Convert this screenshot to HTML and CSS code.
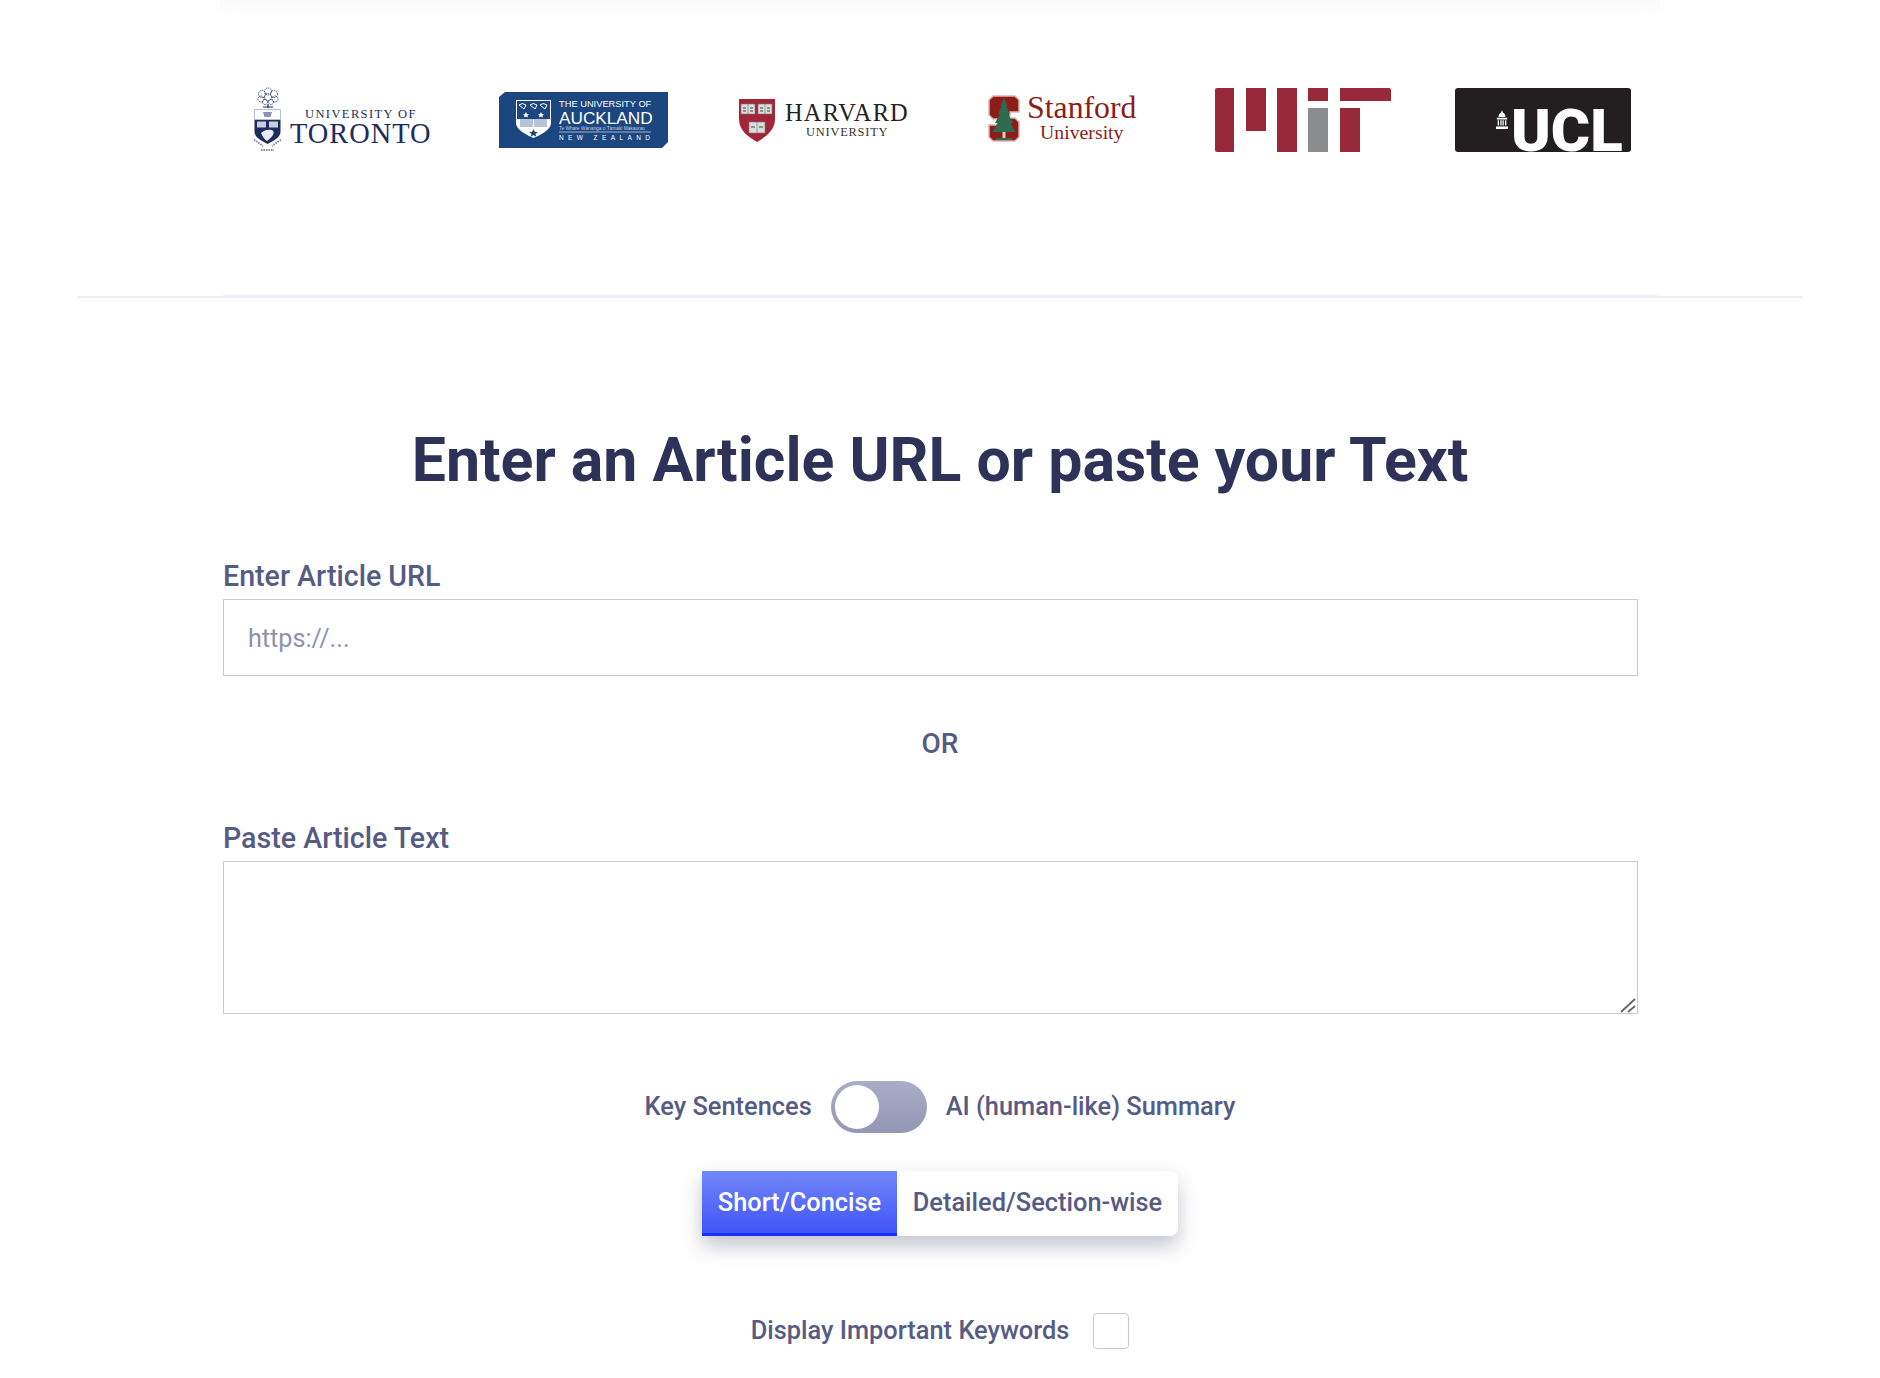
FILE: index.html
```html
<!DOCTYPE html>
<html lang="en">
<head>
  <meta charset="UTF-8">
  <title>Summarize Article</title>
  <link rel="stylesheet" href="styles.css">
</head>
<body>

<div class="top-fade"></div>

<!-- University logos -->
<div class="logos">
  <svg class="logo" viewBox="0 0 200 80" aria-label="University of Toronto">
    <g fill="none" stroke="#1d2c5e" stroke-width=".9" stroke-dasharray="1.200 .8">
      <circle cx="19" cy="14" r="3.500"/>
      <circle cx="25" cy="11.500" r="3.500"/>
      <circle cx="31" cy="14" r="3.500"/>
      <circle cx="18" cy="19" r="3"/>
      <circle cx="25" cy="17" r="3.500"/>
      <circle cx="32" cy="19" r="3"/>
      <circle cx="22" cy="22" r="2.500"/>
      <circle cx="28" cy="22" r="2.500"/>
    </g>
    <path d="M25 24v4M20 27h10" stroke="#1d2c5e" stroke-width="1.200"/>
    <path d="M11.500 29.500h26v10h-26z" fill="#fff" stroke="#9aa2bd" stroke-width=".7"/>
    <path d="M20 32h9l-1.500 5h-6z" fill="#8a93b2"/>
    <path d="M11.500 40h26v12c0 5-7 9-13 12-6-3-13-7-13-12z" fill="#1d2c5e"/>
    <path d="M14 41.500h9v6h-9zM26 41.500h9v6h-9z" fill="#c9cede"/>
    <path d="M18 53c3-3 7-4 11-3 2 1 2 3 1 5-2 3-4 4-6 6-3-2-4-4-6-8z" fill="#e9ebf3"/>
    <path d="M11 60c3 1 6 4 9 6M38 60c-3 1-6 4-9 6M18 70h13" fill="none" stroke="#7d87a8" stroke-width="2" stroke-dasharray="1.500 1"/>
    <text class="uoft-small" x="62" y="37.500">UNIVERSITY OF</text>
    <text class="uoft-big" x="47" y="63">TORONTO</text>
  </svg>

  <svg class="logo" viewBox="0 0 200 80" aria-label="The University of Auckland">
    <path d="M16 17l6-5h163v50l-6 6H16z" fill="#1c4680"/>
    <path d="M33 20h35v23c0 6-8 11-17.500 15C41 54 33 49 33 43z" fill="#fff"/>
    <path d="M34 21h33v18H34z" fill="#1c4680"/>
    <path d="M36 25q3-3 7 0l-2 4zM47 25q3-3 7 0l-2 4zM57 25q3-3 7 0l-2 4z" fill="none" stroke="#fff"/>
    <path d="M43 32l1 2h2l-1.500 1.500.5 2-2-1-2 1 .5-2L40 34h2zM58 32l1 2h2l-1.500 1.500.5 2-2-1-2 1 .5-2L55 34h2z" fill="#fff"/>
    <path d="M37 39h13v8H37zM51 39h13v8H51z" fill="#b8c3d6"/>
    <path d="M50.500 49l1.500 3h3l-2.500 2 1 3-3-2-3 2 1-3-2.500-2h3z" fill="#1c4680"/>
    <g fill="#fff">
      <text class="akl-top" x="76" y="27">THE UNIVERSITY OF</text>
      <text class="akl-main" x="76" y="43.500">AUCKLAND</text>
      <text class="akl-tiny" x="76" y="49.500">Te Whare Wānanga o Tāmaki Makaurau</text>
      <text class="akl-nz" x="76" y="59.500">NEW ZEALAND</text>
    </g>
    <path d="M76 52h92" stroke="#c4cfe0" stroke-width=".8"/>
  </svg>

  <svg class="logo" viewBox="0 0 200 80" aria-label="Harvard University">
    <path d="M16 19h36v20c0 12-10 18-18 23-8-5-18-11-18-23z" fill="#a32638"/>
    <path d="M18 24h14v10H18zM35 24h14v10H35zM26 42h16v11H26z" fill="#dcdcdc" stroke="#777" stroke-width=".6"/>
    <path d="M25 24v10M42 24v10M34 42v11" stroke="#777" stroke-width=".6"/>
    <path d="M20 28h3M27 28h3M37 28h3M44 28h3M20 31h3M27 31h3M37 31h3M44 31h3M28 47h4M36 47h4" stroke="#444" stroke-width="1.200"/>
    <text class="hvd-main" x="62" y="40.500">HARVARD</text>
    <text class="hvd-sub" x="83" y="56">UNIVERSITY</text>
  </svg>

  <svg class="logo" viewBox="0 0 200 80" aria-label="Stanford University">
    <path d="M30 16H52L56 20V32H47V38H52L56 42V57L52 61H30L26 57V45H35V39H30L26 35V20Z" fill="#8c1d18" stroke="#dcb6b4" stroke-width="1.500"/>
    <path d="M41 18l3.500 8H43l4 8h-2l5 9h-2.500l5 9h-23l5-9H32l5-9h-2l4-8h-1.500z" fill="#2e6b4f"/>
    <path d="M39.500 52h3v6h-3z" fill="#d9cfc0"/>
    <path d="M33 58h16v2H33z" fill="#2e6b4f"/>
    <text class="sta-main" x="64" y="38">Stanford</text>
    <text class="sta-sub" x="77" y="59">University</text>
  </svg>

  <svg class="logo" viewBox="0 0 200 80" aria-label="MIT">
    <g fill="#97293a">
      <path d="M12 10a2 2 0 0 1 2-2h17v64H14a2 2 0 0 1-2-2z"/>
      <rect x="43" y="8" width="20" height="43"/>
      <rect x="74" y="8" width="20" height="64"/>
      <rect x="105" y="8" width="20" height="13"/>
      <path d="M137 8h49a2 2 0 0 1 2 2v11h-51z"/>
      <rect x="137" y="28" width="20" height="44"/>
    </g>
    <rect x="105" y="28" width="20" height="44" fill="#8b8c8e"/>
  </svg>

  <div class="ucl-logo">
    <svg class="ucl-dome" viewBox="0 0 16 22">
      <path d="M8 0l1 3c2 1 3 3 3 5H4c0-2 1-4 3-5z" fill="#fff"/>
      <path d="M2 9h12v2H2zM3 12h1.500v6H3zM6 12h1.500v6H6zM8.500 12H10v6H8.500zM11.500 12H13v6h-1.500zM1 19h14v3H1z" fill="#fff"/>
    </svg>
    <span class="ucl-text">UCL</span>
  </div>
</div>

<div class="rule-inner"></div>
<div class="rule-outer"></div>

<div class="form-wrap">
  <h1>Enter an Article URL or paste your Text</h1>

  <label class="field-label" for="articleUrl">Enter Article URL</label>
  <input type="text" id="articleUrl" class="text-input" placeholder="https://..." />

  <div class="or">OR</div>

  <label class="field-label" for="articleText">Paste Article Text</label>
  <div class="area-wrap">
    <textarea id="articleText" class="text-area"></textarea>
    <svg class="grip" viewBox="0 0 16 15">
      <path d="M1 14L15 1M8 14l7-6" fill="none" stroke="#666" stroke-width="1.800"/>
    </svg>
  </div>

  <div class="toggle-row">
    <span class="row-text">Key Sentences</span>
    <span class="toggle"><span class="knob"></span></span>
    <span class="row-text">AI (human-like) Summary</span>
  </div>

  <div class="btn-group">
    <button type="button" class="seg active">Short/Concise</button>
    <button type="button" class="seg">Detailed/Section-wise</button>
  </div>

  <label class="keywords-row">
    <span class="row-text">Display Important Keywords</span>
    <span class="check"></span>
  </label>
</div>

</body>
</html>
```

FILE: styles.css
```css
body {
  margin: 0;
  background: #fff;
  font-family: Roboto, Arial, sans-serif;
  color: #565b84;
}

.top-fade {
  width: 1440px;
  height: 22px;
  margin: 0 auto;
  background: linear-gradient(#fbfbfb, #fff);
  border-radius: 0 0 50% 50%;
}

.logos {
  display: grid;
  grid-template-columns: repeat(5, 240px) 200px;
  align-items: center;
  width: 1400px;
  margin: 58px auto 0 243px;
  height: 80px;
}

.logo {
  width: 200px;
  height: 80px;
  display: block;
}

.logo text {
  font-family: "Liberation Serif", serif;
}

.uoft-small { font-size: 12.5px; letter-spacing: 1.4px; fill: #1d2c5e; }
.uoft-big { font-size: 28.4px; letter-spacing: 1px; fill: #1d2c5e; }

.logo .akl-top { font-family: "Liberation Sans", sans-serif; font-size: 9.3px; }
.logo .akl-main { font-family: "Liberation Sans", sans-serif; font-size: 17.2px; }
.logo .akl-tiny { font-family: "Liberation Sans", sans-serif; font-size: 4.800px; fill: #c4cfe0; }
.logo .akl-nz { font-family: "Liberation Sans", sans-serif; font-size: 6.500px; letter-spacing: 4.4px; }

.hvd-main { font-size: 24.4px; letter-spacing: 1.2px; fill: #222; }
.hvd-sub { font-size: 12.4px; letter-spacing: .8px; fill: #333; }

.sta-main { font-size: 31.8px; fill: #8c1d18; }
.sta-sub { font-size: 19.8px; fill: #8c1d18; }

.ucl-logo {
  width: 176px;
  height: 64px;
  margin-left: 12px;
  background: #231f20;
  border-radius: 3px;
  display: flex;
  align-items: flex-end;
  overflow: hidden;
  box-sizing: border-box;
  padding-left: 40px;
}

.ucl-dome {
  width: 14px;
  height: 19px;
  margin-bottom: 23px;
}

.ucl-text {
  font-family: Roboto, Arial, sans-serif;
  font-weight: 900;
  font-size: 60px;
  line-height: 46px;
  height: 44px;
  color: #fff;
  margin-left: 2px;
}

.rule-inner {
  width: 1434px;
  height: 1px;
  margin: 135px auto 0;
  background: #eceef7;
}

.rule-outer {
  height: 2px;
  margin: 0 77px;
  background: #eceef7;
}

.form-wrap {
  width: 1415px;
  margin-left: 223px;
}

h1 {
  margin: 128px 0 0;
  text-align: center;
  font-size: 60.8px;
  line-height: 70px;
  font-weight: 700;
  color: #2f3258;
  width: 1434px;
}

.field-label {
  display: block;
  margin-top: 63px;
  font-size: 28.6px;
  line-height: 34px;
  font-weight: 500;
}

.text-input,
.text-area {
  display: block;
  box-sizing: border-box;
  width: 100%;
  margin: 6px 0 0;
  border: 1px solid #c7c9de;
  background: #fff;
  font-family: Roboto, Arial, sans-serif;
  font-size: 25.2px;
  color: #565b84;
}

.text-input {
  height: 77px;
  padding: 2px 24px 0;
}

.text-input::placeholder {
  color: #8e91ae;
  opacity: 1;
}

.area-wrap {
  position: relative;
}

.text-area {
  height: 153px;
  resize: none;
}

.grip {
  position: absolute;
  right: 2px;
  bottom: 1px;
  width: 16px;
  height: 15px;
}

.or {
  margin-top: 51px;
  width: 1434px;
  text-align: center;
  font-size: 28px;
  line-height: 34px;
  font-weight: 500;
}

.or + .field-label {
  margin-top: 60px;
}

.toggle-row,
.keywords-row {
  display: flex;
  justify-content: center;
  align-items: center;
  width: 1434px;
  font-size: 25.4px;
  font-weight: 500;
}

.row-text {
  padding-bottom: 2px;
}

.toggle-row {
  gap: 19px;
  margin-top: 67px;
}

.toggle {
  display: block;
  box-sizing: border-box;
  width: 96px;
  height: 52px;
  padding: 4px;
  border-radius: 26px;
  background: linear-gradient(#aaadc6, #9497b5);
}

.knob {
  display: block;
  width: 44px;
  height: 44px;
  border-radius: 50%;
  background: #fff;
}

.btn-group {
  display: flex;
  width: 476px;
  height: 65px;
  margin: 38px 0 0 479px;
  background: #fff;
  border-radius: 0 8px 8px 0;
  box-shadow: 0 10px 20px rgba(60, 63, 100, .3);
}

.seg {
  padding: 0 0 4px;
  border: none;
  background: transparent;
  font-family: Roboto, Arial, sans-serif;
  font-size: 25.4px;
  font-weight: 500;
  color: #565b84;
  flex: 1;
}

.seg.active {
  flex: 0 0 195px;
  color: #fff;
  background: linear-gradient(#7387f9, #3d52f6);
  box-shadow: inset 0 -3px 0 #1a30f2;
}

.keywords-row {
  gap: 24px;
  margin-top: 77px;
}

.check {
  display: block;
  box-sizing: border-box;
  width: 36px;
  height: 36px;
  border: 1px solid #c7c9de;
  border-radius: 4px;
}
```
